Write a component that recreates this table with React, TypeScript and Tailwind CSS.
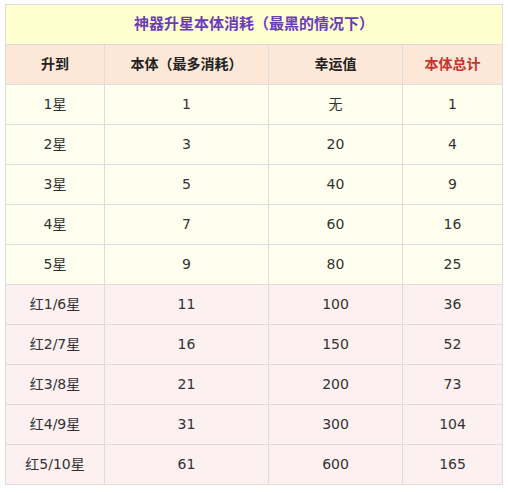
const rows = [
  { lv: "1星", body: "1", luck: "无", total: "1", red: false },
  { lv: "2星", body: "3", luck: "20", total: "4", red: false },
  { lv: "3星", body: "5", luck: "40", total: "9", red: false },
  { lv: "4星", body: "7", luck: "60", total: "16", red: false },
  { lv: "5星", body: "9", luck: "80", total: "25", red: false },
  { lv: "红1/6星", body: "11", luck: "100", total: "36", red: true },
  { lv: "红2/7星", body: "16", luck: "150", total: "52", red: true },
  { lv: "红3/8星", body: "21", luck: "200", total: "73", red: true },
  { lv: "红4/9星", body: "31", luck: "300", total: "104", red: true },
  { lv: "红5/10星", body: "61", luck: "600", total: "165", red: true },
];

const cols = "grid grid-cols-[99px_164px_134px_100px]";

export default function App() {
  return (
    <div
      className="w-[508px] h-[493px] bg-white pt-[4px] pl-[5px]"
      style={{ fontFamily: "Tahoma, 'DejaVu Sans', 'Noto Sans CJK SC', sans-serif" }}
    >
      <div className="w-[498px] border-l border-t border-[#dddddd] text-[14px] text-[#333333]">
        <div className="h-[40px] flex items-center justify-center bg-[#ffffd0] border-r border-b border-[#dddddd] font-bold text-[15px] text-[#6a3cb8]">
          神器升星本体消耗（最黑的情况下）
        </div>
        <div className={`${cols} h-[40px] bg-[#fde8d8] font-bold text-[#222222]`}>
          <div className="flex items-center justify-center border-r border-b border-[#dddddd]">升到</div>
          <div className="flex items-center justify-center border-r border-b border-[#dddddd]">本体（最多消耗）</div>
          <div className="flex items-center justify-center border-r border-b border-[#dddddd]">幸运值</div>
          <div className="flex items-center justify-center border-r border-b border-[#dddddd] text-[#c8332e]">本体总计</div>
        </div>
        {rows.map((r) => (
          <div
            key={r.lv}
            className={`${cols} h-[40px] ${r.red ? "bg-[#fdf0f0]" : "bg-[#fffff0]"}`}
          >
            <div className="flex items-center justify-center border-r border-b border-[#dddddd]">{r.lv}</div>
            <div className="flex items-center justify-center border-r border-b border-[#dddddd]">{r.body}</div>
            <div className="flex items-center justify-center border-r border-b border-[#dddddd]">{r.luck}</div>
            <div className="flex items-center justify-center border-r border-b border-[#dddddd]">{r.total}</div>
          </div>
        ))}
      </div>
    </div>
  );
}
